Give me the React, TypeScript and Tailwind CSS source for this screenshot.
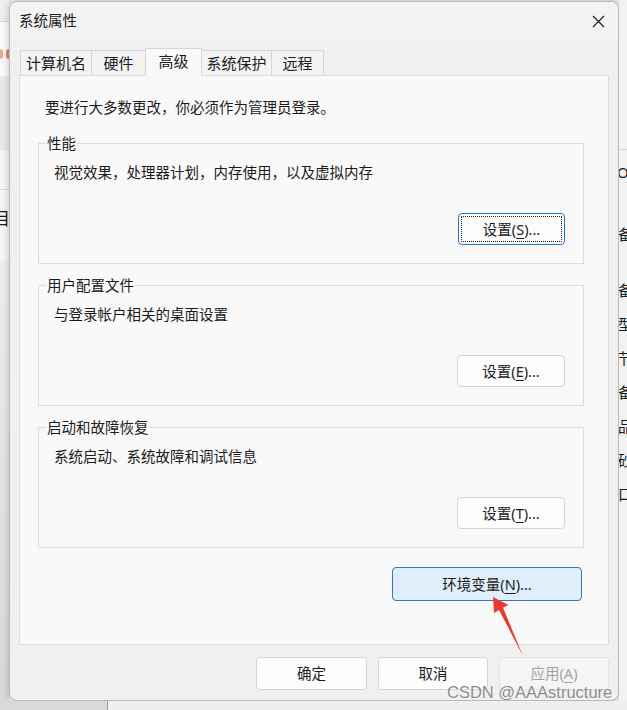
import type { ReactNode } from 'react';

// 系统属性 dialog — 高级 tab

const tabs = ['计算机名', '硬件', '高级', '系统保护', '远程'];

function Key({ k }: { k: string }) {
  return <span className="underline decoration-1 underline-offset-[3px]">{k}</span>;
}

function Btn({ children, className = '' }: { children: ReactNode; className?: string }) {
  return (
    <button type="button" className={`flex items-center justify-center rounded-[4px] border text-[14.5px] leading-none text-[#1b1b1b] ${className}`}>
      {children}
    </button>
  );
}

function Group({ title, desc, k, focused }: { title: string; desc: string; k: string; focused?: boolean }) {
  return (
    <fieldset className="min-w-0 border border-[#dcdcdc] px-[7px] pb-[18px]">
      <legend className="px-[1px] leading-[20px]">{title}</legend>
      <p className="ml-[8px] pt-[9px] leading-[20px]">{desc}</p>
      <div className="mt-[31px] flex justify-end pr-[11px]">
        {focused ? (
          <Btn className="h-[32px] w-[107px] border-[#2a74bd] bg-[#fdfdfd] outline-1 outline-offset-[-4px] outline-dotted outline-[#222]">
            设置(<Key k={k} />)...
          </Btn>
        ) : (
          <Btn className="h-[32px] w-[108px] border-[#d4d4d4] bg-[#fdfdfd]">
            设置(<Key k={k} />)...
          </Btn>
        )}
      </div>
    </fieldset>
  );
}

function Tab({ label, i }: { label: string; i: number }) {
  if (i === 2) {
    return (
      <div className="relative z-10 -mb-px flex h-[28px] w-[57px] items-center justify-center border border-b-0 border-[#d6d6d6] bg-[#f9f9f9] pb-[2px] text-[15px]">
        {label}
      </div>
    );
  }
  const w = ['w-[71px]', 'w-[54px]', '', 'w-[69px] border-l-0', 'w-[53px] border-r'][i];
  return (
    <div className={`flex h-[25px] items-center justify-center border-t border-l border-[#d6d6d6] bg-[#f3f3f3] text-[15px] ${w}`}>
      {label}
    </div>
  );
}

export default function App() {
  return (
    <div className="relative flex h-[710px] w-[627px] flex-col overflow-hidden bg-[#ececec] font-['Noto_Sans','Noto_Sans_CJK_SC',sans-serif] text-[14.5px] text-[#1b1b1b]">
      <div className="flex h-[701px]">
        {/* window behind, left edge */}
        <div className="flex w-[9px] flex-col overflow-hidden">
          <div className="h-[22px] border-b border-[#dcdcdc] bg-[#f0f0f0]" />
          <div className="h-[54px] bg-[#fbfbfb] pt-[27px]">
            <div className="flex justify-between">
              <div className="h-[10px] w-[3px] rounded-r-full bg-[#f2a98d]" />
              <div className="h-[10px] w-[3px] rounded-l-full bg-[#e9825c]" />
            </div>
          </div>
          <div className="h-[74px] bg-[#ebebeb]" />
          <div className="h-[40px] border-b border-[#dddddd] bg-[#f6f6f6]" />
          <div className="h-[70px] bg-[#f7f7f7] pt-[20px] leading-none">
            <span className="-ml-[7px] block text-[17px]">目</span>
          </div>
          <div className="flex-1 bg-gradient-to-b from-[#f0f0f0] to-[#dadada]" />
        </div>

        {/* dialog */}
        <div className="mt-px flex h-[700px] w-[610px] flex-col overflow-hidden rounded-[8px] border border-[#b9b9b9] bg-[#f0f0f0] shadow-[0_0_10px_rgba(0,0,0,0.22)]">
          <div className="flex h-[38px] items-center justify-between bg-[#f3f3f3] pl-[9px] pr-[13px]">
            <span className="text-[14.5px]">系统属性</span>
            <svg width="13" height="13" viewBox="0 0 13 13" className="mt-[1px]">
              <path d="M1 1 L12 12 M12 1 L1 12" stroke="#1b1b1b" strokeWidth="1.1" fill="none" />
            </svg>
          </div>

          <div className="flex flex-1 flex-col px-[9px] pt-[8px]">
            <div className="flex h-[27px] items-end pl-[1px]">
              {tabs.map((t, i) => (
                <Tab key={t} label={t} i={i} />
              ))}
            </div>

            <div className="h-[570px] w-[590px] border border-[#dcdcdc] bg-[#f9f9f9]">
              <p className="pl-[25px] pt-[21px] leading-[20px]">要进行大多数更改，你必须作为管理员登录。</p>
              <div className="ml-[18px] mt-[16px] flex w-[546px] flex-col gap-[11px]">
                <Group title="性能" desc="视觉效果，处理器计划，内存使用，以及虚拟内存" k="S" focused />
                <Group title="用户配置文件" desc="与登录帐户相关的桌面设置" k="E" />
                <Group title="启动和故障恢复" desc="系统启动、系统故障和调试信息" k="T" />
              </div>
              <div className="ml-[18px] mt-[19px] flex w-[546px] justify-end pr-[2px]">
                <Btn className="h-[34px] w-[190px] border-[#2f78c3] bg-[#e0eef9]">
                  环境变量(<Key k="N" />)...
                </Btn>
              </div>
            </div>

            <div className="flex justify-end gap-[11px] pt-[12px]">
              <Btn className="h-[33px] w-[111px] border-[#d4d4d4] bg-[#fdfdfd]">确定</Btn>
              <Btn className="h-[33px] w-[110px] border-[#d4d4d4] bg-[#fdfdfd]">取消</Btn>
              <Btn className="h-[33px] w-[110px] border-[#e3e3e3] bg-[#f5f5f5] !text-[#a2a2a2]">
                应用(<Key k="A" />)
              </Btn>
            </div>
          </div>
        </div>

        {/* window behind, right edge */}
        <div className="flex w-[8px] flex-col overflow-hidden bg-[#f2f2f2]">
          <div className="h-[150px] border-b border-[#d4d4d4]" />
          <div className="flex flex-col gap-[14px] pt-[12px] text-[15px] leading-[20px]">
            <span className="-ml-[2px]">O</span>
            <span className="mt-[28px] -ml-[1px]">备</span>
            <span className="mt-[22px] -ml-[1px]">备</span>
            <span className="-ml-[1px]">型</span>
            <span className="-ml-[1px]">节</span>
            <span className="-ml-[1px]">备</span>
            <span className="-ml-[1px]">品</span>
            <span className="-ml-[1px]">砂</span>
            <span className="-ml-[1px]">口</span>
          </div>
        </div>
      </div>

      <div className="flex h-[9px]">
        <div className="w-[108px] border-r border-[#9a9a9a] bg-[#d9d9d9]" />
        <div className="flex-1 bg-[#efefef]" />
      </div>

      {/* red annotation arrow */}
      <svg className="pointer-events-none absolute left-0 top-0" width="627" height="710" viewBox="0 0 627 710">
        <polygon points="493,597 508.5,605 503,607.5 523,656 499,610 494,613" fill="#ea3a2f" />
      </svg>

      {/* watermark */}
      <span className="pointer-events-none absolute left-[447px] top-[684px] font-['Liberation_Sans',sans-serif] text-[16.5px] leading-none text-[#8c8c8c] [text-shadow:0_0_2px_#fff]">
        CSDN @AAAstructure
      </span>
    </div>
  );
}
